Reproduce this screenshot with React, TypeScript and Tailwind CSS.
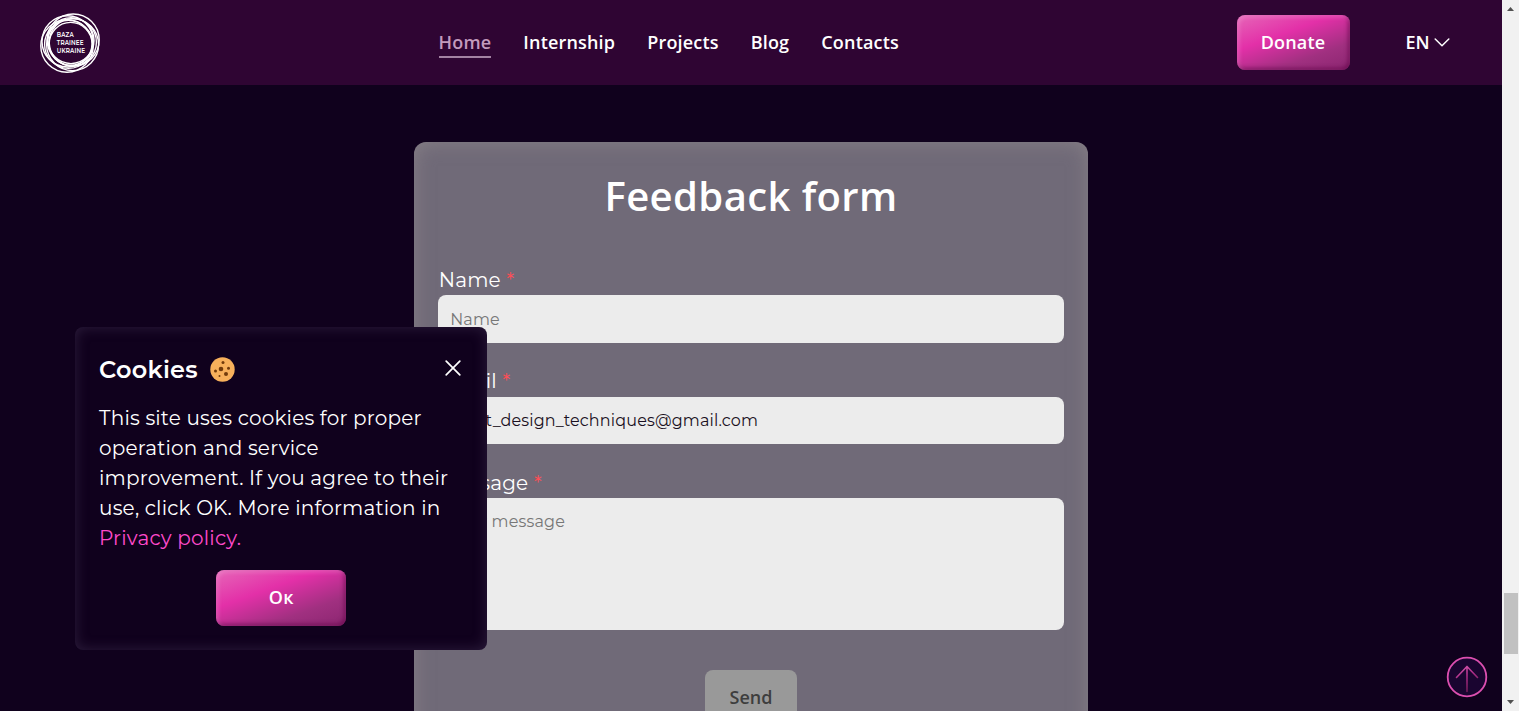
import React from "react";

const NAV = ["Internship", "Projects", "Blog", "Contacts"];
const RINGS = [
  [27, 33, 26.2],
  [33.2, 27, 26],
  [32.6, 31.6, 26],
  [27.6, 28.4, 25.6],
  [28.6, 31.4, 24],
  [32.8, 29.2, 23.6],
  [31, 27.6, 23],
  [30.6, 30.8, 21.4],
];

function Logo() {
  return (
    <svg className="size-[60px] shrink-0" viewBox="0 0 60 60" fill="none">
      <g stroke="#fff" strokeWidth="1.4">
        {RINGS.map(([x, y, r]) => (
          <circle key={x} cx={x} cy={y} r={r} />
        ))}
      </g>
      <g fill="#fff" fontFamily="Montserrat, Inter, sans-serif" fontSize="6.4" fontWeight="600">
        <text x="16.8" y="24.2" textLength="17" lengthAdjust="spacingAndGlyphs">BAZA</text>
        <text x="16.8" y="32" textLength="27" lengthAdjust="spacingAndGlyphs">TRAINEE</text>
        <text x="16.8" y="39.7" textLength="28.5" lengthAdjust="spacingAndGlyphs">UKRAINE</text>
      </g>
    </svg>
  );
}

function PinkButton({ children, className }: { children: React.ReactNode; className: string }) {
  return (
    <button
      className={`flex h-[55.5px] items-center justify-center rounded-lg bg-[linear-gradient(160deg,#e667b8_0%,#e330a8_37%,#a03080_72%,#8b2670_100%)] pb-[2px] text-lg font-semibold tracking-[0.01em] text-white shadow-[inset_2px_2px_4px_rgba(255,190,235,0.3),inset_-2px_-2px_4px_rgba(95,0,70,0.6)] ${className}`}
    >
      {children}
    </button>
  );
}

function Header() {
  return (
    <header className="flex h-[85px] shrink-0 items-center justify-between bg-[#2f0533] px-10 text-lg font-semibold tracking-[0.01em] text-white">
      <Logo />
      <nav className="flex gap-8">
        <a className="h-[31px] border-b-2 border-[#a382a2] pt-[1px] text-[#c39bbd]">Home</a>
        {NAV.map((n) => (
          <a key={n} className="pt-[1px]">{n}</a>
        ))}
      </nav>
      <div className="flex items-center gap-[55.500px]">
        <PinkButton className="w-[113px] pr-[2px]">Donate</PinkButton>
        <div className="-ml-[0.6px] flex w-[56.6px] items-center gap-[4px] pb-[2px]">
          EN
          <svg className="mt-[2px] h-[9px] w-[16px] shrink-0" viewBox="0 0 16 9" fill="none" stroke="#fff" strokeWidth="1.5" strokeLinecap="round" strokeLinejoin="round">
            <path d="M1.200 1l6.800 6.700L14.800 1" />
          </svg>
        </div>
      </div>
    </header>
  );
}

function Label({ text, className = "" }: { text: string; className?: string }) {
  return (
    <span className={`flex h-[30px] items-center gap-[5.5px] pl-[0.5px] font-[Montserrat,Inter,sans-serif] text-[20px] tracking-[0.01em] text-white ${className}`}>
      {text}
      <span className="text-[#ff4d55]">*</span>
    </span>
  );
}

const FIELD =
  "block w-full rounded-lg bg-[#ececec] px-3 font-[Montserrat,Inter,sans-serif] text-base tracking-[0.01em] outline-none placeholder:text-[#777]";

function FeedbackForm() {
  return (
    <form className="flex h-[640px] w-[673.6px] shrink-0 flex-col rounded-xl bg-[#706a78] px-6 pt-[27px] shadow-[inset_0_0_20px_rgba(160,150,150,0.5)]">
      <h2 className="text-center text-[40px] leading-[54px] font-semibold tracking-[0.01em] text-white">Feedback form</h2>
      <div className="mt-[42.4px] flex flex-col gap-6">
        <label>
          <Label text="Name" />
          <input className={`${FIELD} h-[47.4px]`} placeholder="Name" />
        </label>
        <label>
          <Label text="Email" className="pb-[1.5px]" />
          <input className={`${FIELD} h-[47.4px] text-[#1a1022]`} defaultValue="most_design_techniques@gmail.com" />
        </label>
        <label>
          <Label text="Message" />
          <textarea className={`${FIELD} h-[131.4px] resize-none py-[11.6px]`} placeholder="Your message" />
        </label>
      </div>
      <button className="mt-10 h-[55px] w-[91.4px] self-center rounded-lg bg-[#999] text-lg font-semibold text-[#3e3e3e]">Send</button>
    </form>
  );
}

function CookieIcon() {
  return (
    <svg className="size-[25px]" viewBox="0 0 25 25">
      <circle cx="12.5" cy="12.5" r="12.2" fill="#f7b05b" />
      <g fill="#723b0c">
        <circle cx="11" cy="12" r="2.3" />
        <circle cx="13" cy="5.6" r="1.5" />
        <circle cx="18.5" cy="11.3" r="1.5" />
        <circle cx="16" cy="17" r="2" />
        <circle cx="5.5" cy="14" r="1.5" />
        <circle cx="9.5" cy="19" r="1" />
      </g>
    </svg>
  );
}

function CookieNotice() {
  return (
    <section className="absolute top-[327px] left-[75px] flex h-[322.5px] w-[412.4px] flex-col rounded-lg bg-[#10011d] px-6 font-[Montserrat,Inter,sans-serif] text-white shadow-[inset_0_0_14px_rgba(90,75,110,0.4)]">
      <div className="mt-[27px] flex h-[30px] items-center">
        <h3 className="w-[111px] pt-[2px] text-[24px] font-semibold tracking-[0.01em] whitespace-nowrap">Cookies</h3>
        <CookieIcon />
        <svg className="mr-[2px] mb-[2px] ml-auto size-4" viewBox="0 0 16 16" stroke="#fff" strokeWidth="1.7" strokeLinecap="round">
          <path d="M1.2 1.2l13.6 13.6M14.8 1.2L1.2 14.8" />
        </svg>
      </div>
      <p className="mt-[19px] text-[20px] leading-[30px] tracking-[0.01em] whitespace-nowrap">
        This site uses cookies for proper<br />
        operation and service<br />
        improvement. If you agree to their<br />
        use, click OK. More information in<br />
        <a className="text-[#ff4acb]">Privacy policy.</a>
      </p>
      <PinkButton className="mt-[17px] w-[130.4px] self-center font-['Open_Sans',sans-serif]">Ок</PinkButton>
    </section>
  );
}

function Scrollbar() {
  return (
    <div className="flex h-full w-[17px] shrink-0 flex-col items-center bg-[#f1f1f1]">
      <svg className="h-[17px] w-[17px]" viewBox="0 0 17 17"><path d="M5 11h7L8.500 7z" fill="#505050" /></svg>
      <div className="mt-[576px] ml-px h-[61px] w-[14px] bg-[#c1c1c1]" />
      <svg className="mt-auto h-[17px] w-[17px]" viewBox="0 0 17 17"><path d="M5 6h7L8.500 10z" fill="#505050" /></svg>
    </div>
  );
}

export default function App() {
  return (
    <div className="flex h-[711px] w-[1519px] overflow-hidden bg-[#10011d] font-['Open_Sans',sans-serif]">
      <div className="relative flex h-full w-[1502px] flex-col overflow-hidden">
        <Header />
        <main className="flex min-h-0 flex-1 items-start justify-center pt-[57px]">
          <FeedbackForm />
        </main>
        <CookieNotice />
        <button className="absolute top-[656px] left-[1446px] size-[42px]" aria-label="Up">
          <svg className="size-full" viewBox="0 0 42 42" fill="none">
            <defs>
              <linearGradient id="up" gradientUnits="userSpaceOnUse" x1="15" y1="8" x2="26" y2="36">
                <stop stopColor="#e05db3" /><stop offset=".45" stopColor="#a92b85" /><stop offset="1" stopColor="#68184f" />
              </linearGradient>
            </defs>
            <circle cx="21" cy="21" r="19.3" fill="#1a0530" stroke="#dc4fb0" strokeWidth="1.8" />
            <path d="M21 35.500V10.500M10.500 21.500L21 10.500l10.500 11" stroke="url(#up)" strokeWidth="1.6" strokeLinecap="round" strokeLinejoin="round" />
          </svg>
        </button>
      </div>
      <Scrollbar />
    </div>
  );
}
